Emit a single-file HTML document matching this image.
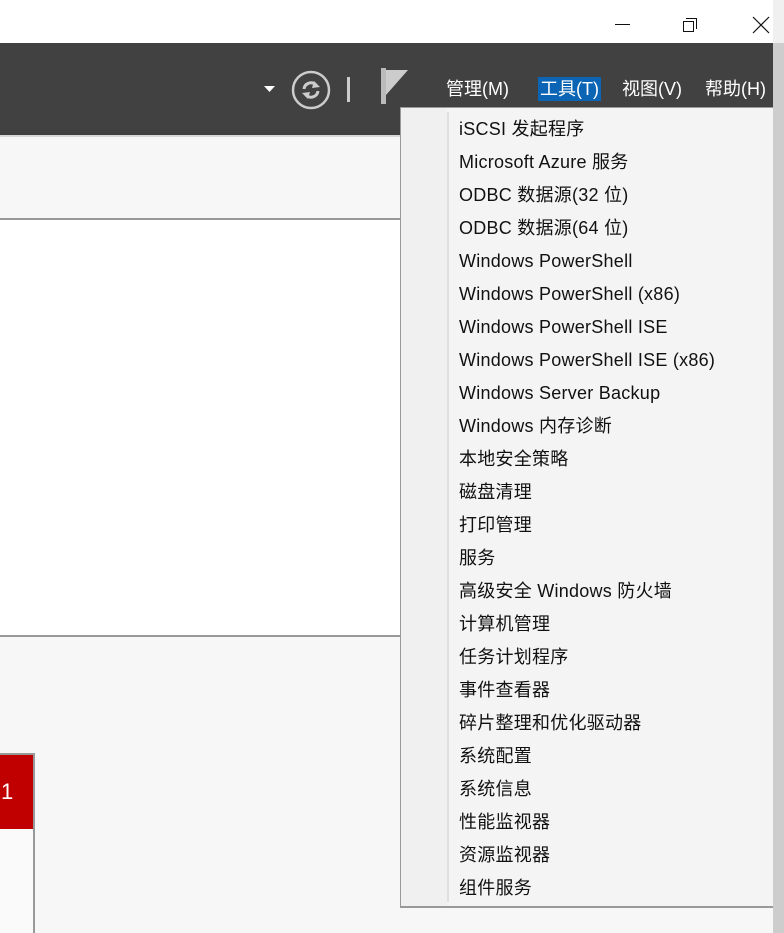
<!DOCTYPE html>
<html><head><meta charset="utf-8"><style>
*{margin:0;padding:0;box-sizing:border-box}
body{width:784px;height:933px;position:relative;overflow:hidden;background:#f7f7f7;font-family:"Liberation Sans","Noto Sans CJK SC",sans-serif}
.a{position:absolute}
.menu span{position:absolute;left:58px;font-size:18px;color:#111;white-space:nowrap;line-height:24px;letter-spacing:0.25px}
.top span{position:absolute;top:77px;font-size:18px;color:#fff;line-height:24px;white-space:nowrap}
</style></head><body>
<div class="a" style="left:0;top:0;width:784px;height:43px;background:#fff"></div>
<div class="a" style="left:615px;top:24px;width:15px;height:1px;background:#111"></div>
<div class="a" style="left:683px;top:21px;width:11px;height:11px;border:1px solid #111;background:#fff"></div>
<div class="a" style="left:686px;top:18px;width:11px;height:11px;border-top:1px solid #111;border-right:1px solid #111"></div>
<svg class="a" style="left:752px;top:16px" width="18" height="18"><path d="M1 1L17 17M17 1L1 17" stroke="#111" stroke-width="1.2"/></svg>
<div class="a" style="left:0;top:43px;width:784px;height:93px;background:#414141"></div>
<div class="a" style="left:0;top:135px;width:773px;height:2px;background:#d8d8d8"></div>
<svg class="a" style="left:264px;top:86px" width="12" height="8"><path d="M0 0H11L5.5 6Z" fill="#fff"/></svg>
<svg class="a" style="left:291px;top:70px" width="40" height="40"><circle cx="20" cy="20" r="18" fill="none" stroke="#ccc" stroke-width="2.5"/><path d="M13 19a7 7 0 0 1 12-4M27 21a7 7 0 0 1-12 4" fill="none" stroke="#ccc" stroke-width="3"/><path d="M23 11L29 17L21 18Z M17 29L11 23L19 22Z" fill="#ccc"/></svg>
<div class="a" style="left:347px;top:77px;width:3px;height:25px;background:#ccc"></div>
<svg class="a" style="left:380px;top:67px" width="30" height="38"><rect x="1" y="1" width="5" height="36" fill="#bbb"/><path d="M6 3H28L6 28Z" fill="#ccc"/></svg>
<div class="top">
<span style="left:446px">管理(M)</span>
<span style="left:538px;top:77px;background:#0b64b4;padding:0 2px">工具(T)</span>
<span style="left:622px">视图(V)</span>
<span style="left:705px">帮助(H)</span>
</div>
<div class="a" style="left:0;top:218px;width:773px;height:2px;background:#999"></div>
<div class="a" style="left:0;top:220px;width:773px;height:415px;background:#fff"></div>
<div class="a" style="left:0;top:635px;width:773px;height:2px;background:#999"></div>
<div class="a" style="left:0;top:753px;width:35px;height:180px;background:#fafafa;border-top:2px solid #999;border-right:2px solid #999"></div>
<div class="a" style="left:0;top:755px;width:33px;height:74px;background:#c00000;color:#fff;font-size:22px;line-height:74px;padding-left:1px">1</div>
<div class="a" style="left:773px;top:0;width:11px;height:933px;background:#cdcdcd"></div>
<div class="a" style="left:773px;top:0;width:11px;height:43px;background:#f0f0f0"></div>
<div class="a menu" style="left:400px;top:107px;width:373px;height:801px;background:#f4f4f4;border:1px solid #999;border-right:none;border-bottom:2px solid #999">
<div class="a" style="left:0;top:0;width:46px;height:798px;background:#f0f0f0"></div>
<div class="a" style="left:46px;top:4px;width:2px;height:790px;background:#e0e0e0"></div>
<span style="top:9px">iSCSI 发起程序</span>
<span style="top:42px">Microsoft Azure 服务</span>
<span style="top:75px">ODBC 数据源(32 位)</span>
<span style="top:108px">ODBC 数据源(64 位)</span>
<span style="top:141px">Windows PowerShell</span>
<span style="top:174px">Windows PowerShell (x86)</span>
<span style="top:207px">Windows PowerShell ISE</span>
<span style="top:240px">Windows PowerShell ISE (x86)</span>
<span style="top:273px">Windows Server Backup</span>
<span style="top:306px">Windows 内存诊断</span>
<span style="top:339px">本地安全策略</span>
<span style="top:372px">磁盘清理</span>
<span style="top:405px">打印管理</span>
<span style="top:438px">服务</span>
<span style="top:471px">高级安全 Windows 防火墙</span>
<span style="top:504px">计算机管理</span>
<span style="top:537px">任务计划程序</span>
<span style="top:570px">事件查看器</span>
<span style="top:603px">碎片整理和优化驱动器</span>
<span style="top:636px">系统配置</span>
<span style="top:669px">系统信息</span>
<span style="top:702px">性能监视器</span>
<span style="top:735px">资源监视器</span>
<span style="top:768px">组件服务</span>
</div>
</body></html>
